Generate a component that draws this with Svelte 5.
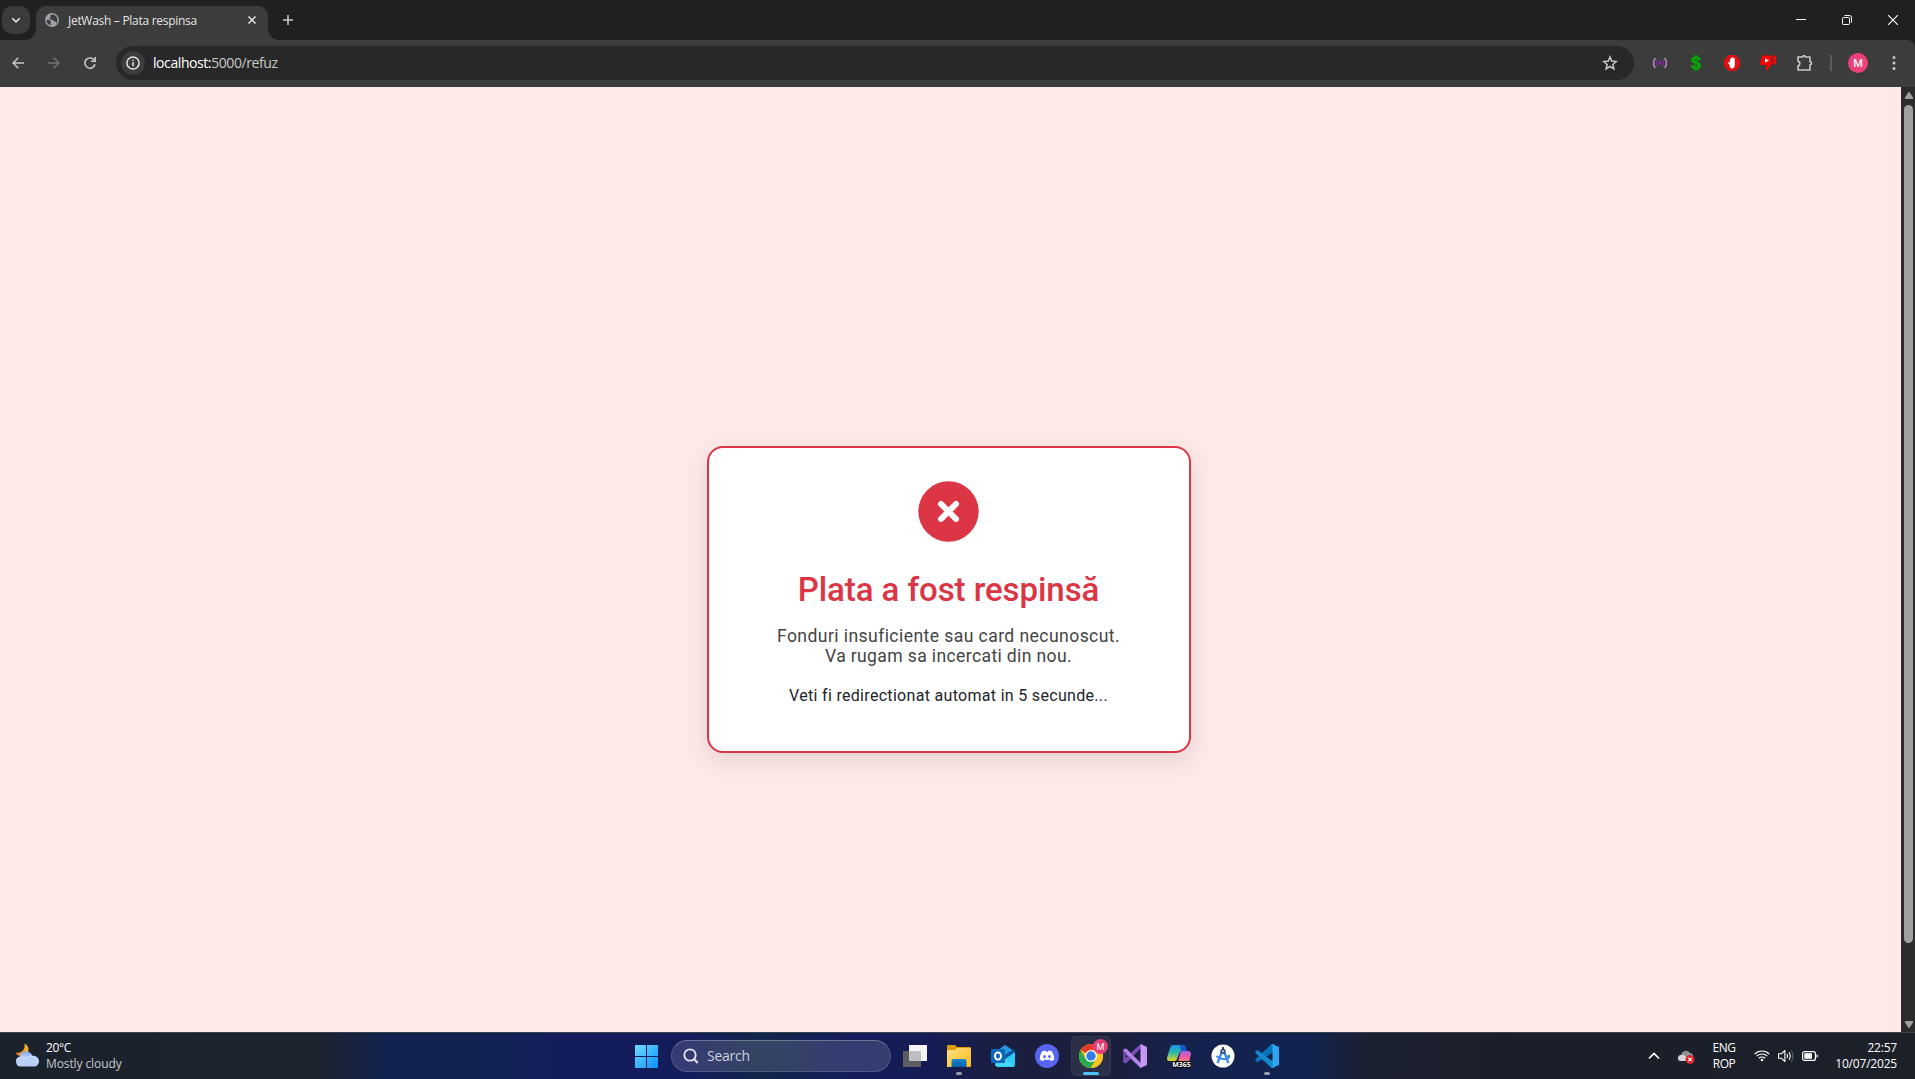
<script>
  const extensions = ['signal', 'dollar', 'adblock', 'dislike', 'puzzle'];
  const apps = ['taskview', 'explorer', 'outlook', 'discord', 'chrome', 'vs', 'm365', 'studio', 'vscode'];
  const running = ['explorer', 'vscode'];
</script>

<div class="screen">
  <header class="tabstrip">
    <button class="tab-search" aria-label="Search tabs">
      <svg width="10" height="10" viewBox="0 0 10 10"><path d="M1.3 3.2 5 6.9l3.7-3.7" fill="none" stroke="#e3e3e3" stroke-width="1.6" /></svg>
    </button>
    <div class="tab">
      <svg width="14" height="14" viewBox="0 0 14 14">
        <circle cx="7" cy="7" r="7" fill="#9aa0a6" />
        <path d="M1.4 7.2c1.5-.3 4 .1 4.4 1.1.4 1-.5 1.3-.3 2.3.1.7.6.7.7 1.7C3.700 12 1.500 10 1.400 7.200zM7.300 1.500C6.600 2.200 5.600 2 5.300 2.900c-.2.8.6 1.100.3 1.900-.2.700-1.200.400-1.300 1.100 0 .600.800.600 1.800.600 1.300 0 1.600.300 1.900 1 .5.900 1.600.400 2.400 1 .7.500.4 1.300 1 1.900C13.700 7 12 1.700 7.300 1.500z" fill="#3c3c3c" />
      </svg>
      <span class="tab-title">JetWash – Plata respinsa</span>
      <svg class="tab-close" width="10" height="10" viewBox="0 0 10 10"><path d="m1.500 1.500 7 7m0-7-7 7" stroke="#e3e3e3" stroke-width="1.500" /></svg>
    </div>
    <svg class="new-tab" width="12" height="12" viewBox="0 0 12 12"><path d="M6 1v10M1 6h10" stroke="#c7c7c7" stroke-width="1.600" /></svg>
    <div class="window-buttons">
      <span><svg width="10" height="10" viewBox="0 0 10 10"><path d="M0 4.500h10" stroke="#fff" /></svg></span>
      <span><svg width="10" height="10" viewBox="0 0 10 10" fill="none" stroke="#fff"><rect x=".5" y="2.500" width="7" height="7" rx="1" /><path d="M2.500 .5h5a2 2 0 0 1 2 2v5" /></svg></span>
      <span><svg width="10" height="10" viewBox="0 0 10 10"><path d="m0 0 10 10m0-10L0 10" stroke="#fff" stroke-width="1.100" /></svg></span>
    </div>
  </header>

  <div class="toolbar">
    <nav class="nav">
      <svg width="12" height="12" viewBox="0 0 12 12" fill="none" stroke="#c7c7c7" stroke-width="1.500"><path d="M12 6H1M6.300.700 1 6l5.300 5.300" /></svg>
      <svg width="12" height="12" viewBox="0 0 12 12" fill="none" stroke="#757575" stroke-width="1.500"><path d="M0 6h11M5.700.700 11 6l-5.300 5.300" /></svg>
      <svg width="12" height="12" viewBox="0 0 12 12"><path d="M10.300 3.300A5.100 5.100 0 1 0 11 7.200" fill="none" stroke="#c7c7c7" stroke-width="1.600" /><path d="M12 0v5H7V3.400h3.400V0z" fill="#c7c7c7" /></svg>
    </nav>
    <div class="omnibox">
      <span class="site-info">
        <svg width="14" height="14" viewBox="0 0 14 14"><circle cx="7" cy="7" r="6.100" fill="none" stroke="#e3e3e3" stroke-width="1.500" /><path d="M7 6v4.300M7 3.700v1.400" stroke="#e3e3e3" stroke-width="1.500" /></svg>
      </span>
      <span class="url"><b>localhost:</b>5000/refuz</span>
      <svg class="star" width="16" height="16" viewBox="0 0 16 16"><path d="m8 1.900 1.700 4.200 4.600.400-3.500 3 1.100 4.400L8 11.500l-3.900 2.400 1.100-4.400-3.500-3 4.600-.4z" fill="none" stroke="#c7c7c7" stroke-width="1.500" /></svg>
    </div>
    <div class="extensions">
      {#each extensions as name}
        <span class="ext">
          {#if name === 'signal'}
            <svg width="16" height="16" viewBox="0 0 16 16" fill="none"><path d="M3.300 3Q-.200 8 3.300 13M12.700 3q3.500 5 0 10" stroke="#b08bc4" stroke-width="1.500" /><path d="M5.200 5.200q-2 2.800 0 5.600M10.800 5.200q2 2.800 0 5.600" stroke="#8226a0" stroke-width="1.300" /><circle cx="8" cy="8" r="1.400" fill="#8e24aa" /></svg>
          {:else if name === 'dollar'}
            <svg width="16" height="16" viewBox="0 0 16 16" fill="none" stroke="#06a906"><path d="M12 5.100C11.400 1.900 4.700 1.800 4.400 5c-.2 3.300 7.400 2.300 7.400 5.600 0 3.700-7.500 3.300-7.700-.2" stroke-width="2.500" /><path d="M7 0v16M9.300 0v16" stroke-width="1.200" /></svg>
          {:else if name === 'adblock'}
            <svg width="16" height="16" viewBox="0 0 16 16"><path d="M4.700 0h6.600L16 4.700v6.600L11.300 16H4.700L0 11.300V4.700z" fill="#e00f12" /><path d="M5.500 10 3.900 7.600l1-.5 1 .9V4.200c0-.8 1.100-.8 1.200 0V3.100c0-.9 1.200-.9 1.300 0v-.3c.1-.8 1.200-.7 1.200.2v.6c.1-.7 1.200-.6 1.200.2v6.300c0 2.300-1.200 3.500-3 3.500-1.300 0-1.900-1.400-2.300-3.600z" fill="#fff" /></svg>
          {:else if name === 'dislike'}
            <svg width="16" height="16" viewBox="0 0 16 16"><path d="M2.500.500h9v9L7 15.500 5.800 14l.8-4H1.300Q0 10 0 8.500zM13 .5h3v9h-3z" fill="#f00" /><path d="m5 3.300 4 2.200-4 2.300z" fill="#fff" /></svg>
          {:else}
            <svg width="16" height="16" viewBox="0 0 16 16"><path d="M1 2h4.700a1.300 1.300 0 0 1 2.600 0H13v4.700a1.500 1.500 0 0 1 0 3V15H1v-4.200a2.400 2.400 0 0 0 0-4.700z" fill="none" stroke="#c7c7c7" stroke-width="1.600" stroke-linejoin="round" /></svg>
          {/if}
        </span>
      {/each}
      <i class="divider"></i>
      <span class="avatar">M</span>
      <svg class="kebab" width="4" height="16" viewBox="0 0 4 16" fill="#c7c7c7"><circle cx="2" cy="2.500" r="1.500" /><circle cx="2" cy="8" r="1.500" /><circle cx="2" cy="13.500" r="1.500" /></svg>
    </div>
  </div>

  <div class="viewport">
    <main class="page">
      <section class="card">
        <svg class="badge" width="61" height="61" viewBox="0 0 61 61"><circle cx="30.500" cy="30.500" r="30.200" fill="#dc3545" /><path d="m23 23 15 15m0-15L23 38" stroke="#fff" stroke-width="6" stroke-linecap="round" /></svg>
        <h1>Plata a fost respinsă</h1>
        <p class="reason"><span class="line1">Fonduri insuficiente sau card necunoscut.</span><br /><span class="line2">Va rugam sa incercati din nou.</span></p>
        <p class="redirect">Veti fi redirectionat automat in 5 secunde...</p>
      </section>
    </main>
    <div class="scrollbar">
      <svg width="10" height="7" viewBox="0 0 10 7"><path d="M4.200.500Q5-.400 5.800.500L9.300 6Q9.500 7 8.500 7h-7Q.500 7 .700 6z" fill="#9f9f9f" /></svg>
      <i class="thumb"></i>
      <svg class="down" width="10" height="7" viewBox="0 0 10 7"><path d="M4.200 6.500q.8.900 1.600 0L9.300 1Q9.500 0 8.500 0h-7Q.500 0 .700 1z" fill="#9f9f9f" /></svg>
    </div>
  </div>

  <footer class="taskbar">
    <div class="weather">
      <svg width="24" height="24" viewBox="0 0 24 24">
        <defs><linearGradient id="moon" x1="1" y1="0" x2="0" y2="1"><stop stop-color="#f6c33b" /><stop offset="1" stop-color="#ee7b17" /></linearGradient><linearGradient id="cloud" x2="0" y2="1"><stop stop-color="#84aaf0" /><stop offset=".5" stop-color="#bdd2f8" /><stop offset="1" stop-color="#b7ccf4" /></linearGradient></defs>
        <path d="M9.500.500c4.500 2 5.300 7.500 2.300 10.500-3 3.200-9 3-11.300-1.200C7.500 10.500 10.500 5.500 9.500.500z" fill="url(#moon)" />
        <path d="M5.500 23.500a5 5 0 0 1-.8-9.800C4.700 11 7.500 8.500 11 8.500c3.200 0 5.600 1.900 6.300 4.300 3.700-.2 6.700 2 6.700 5.400 0 3-2.300 5.300-5.300 5.300z" fill="url(#cloud)" />
        <path d="M1.500 17c3-4 7-3.200 9-1.500 3-3 8-3 11-.5" fill="none" stroke="#dce8fd" stroke-width="1.500" opacity=".65" />
      </svg>
      <div><div class="temp">20°C</div><div class="sky">Mostly cloudy</div></div>
    </div>

    <div class="dock">
      <span class="tile start">
        <svg width="23" height="23" viewBox="0 0 23 23"><defs><linearGradient id="win" x2="1" y2="1"><stop stop-color="#74dcff" /><stop offset="1" stop-color="#0590fb" /></linearGradient></defs><path d="M0 0h11v11H0zM12 0h11v11H12zM0 12h11v11H0zM12 12h11v11H12z" fill="url(#win)" /></svg>
      </span>
      <div class="search">
        <svg width="16" height="16" viewBox="0 0 16 16" fill="none" stroke="#e2e4ee"><circle cx="7" cy="7" r="5.700" stroke-width="1.800" /><path d="m11 11 3.800 4" stroke-width="2" /></svg>
        <span>Search</span>
      </div>
      {#each apps as app}
        <span class="tile" class:active={app === 'chrome'} class:running={running.includes(app)}>
          {#if app === 'taskview'}
            <svg width="24" height="24" viewBox="0 0 24 24"><path d="M6 1h18v16H6z" fill="#f5f5f6" /><path d="M0 7h18v16H0z" fill="#5d5d60" /><path d="M6 7h12v10H6z" fill="#bebec2" /></svg>
          {:else if app === 'explorer'}
            <svg width="24" height="24" viewBox="0 0 24 24"><defs><linearGradient id="fold" x2="1" y2="1"><stop stop-color="#ffe087" /><stop offset="1" stop-color="#fdb813" /></linearGradient><linearGradient id="tray" x2="0" y2="1"><stop stop-color="#1589d2" /><stop offset="1" stop-color="#0960ad" /></linearGradient></defs><path d="M0 2q0-1 1-1h7l2 2h13q1 0 1 1v5H0z" fill="#dc9c0c" /><path d="M0 6h8l2-2h13q1 0 1 1v17q0 1-1 1H0z" fill="url(#fold)" /><path d="M4.500 23v-6q0-2 2-2H18q1.500 0 1.500 2v6z" fill="url(#tray)" /><path d="M8 19h8" stroke="#0b62a8" /></svg>
          {:else if app === 'outlook'}
            <svg width="24" height="24" viewBox="0 0 24 24"><path d="m4 8 10-7 10 7-2 8H5z" fill="#1277c5" /><path d="m9 5 5-4 9.500 6.500L12 14z" fill="#2899df" /><path d="m14 14 10-6v13q0 2-2 2H6q-2-1-2-3z" fill="#2fcaf2" /><path d="m4 19 10-5 9 8.500H6q-2-1-2-3z" fill="#4bdcf7" opacity=".7" /><path d="m12 12 11-7 1 3-10 7z" fill="#0a55a1" /><rect y="5" width="14" height="14" rx="1" fill="#0d67bb" /><ellipse cx="7" cy="12" rx="3" ry="3.600" fill="none" stroke="#fff" stroke-width="1.900" /></svg>
          {:else if app === 'discord'}
            <svg width="24" height="24" viewBox="0 0 24 24"><circle cx="12" cy="12" r="12" fill="#5865f2" /><path d="M7 7.500q2-1 3.500-1l.5 1.200h2l.5-1.200q1.500 0 3.500 1 2.600 3.800 2.300 8-1.500 1.400-3.500 1.700l-1-1.600q-2.800.7-5.600 0l-1 1.600q-2-.3-3.500-1.700-.3-4.200 2.300-8z" fill="#fff" /><ellipse cx="9.600" cy="12.500" rx="1.400" ry="1.600" fill="#5865f2" /><ellipse cx="14.400" cy="12.500" rx="1.400" ry="1.600" fill="#5865f2" /></svg>
          {:else if app === 'chrome'}
            <svg width="24" height="24" viewBox="0 0 24 24"><circle cx="12" cy="12" r="12" fill="#fcc31e" /><path d="M12 12 1.600 6A12 12 0 0 1 22.400 6H12z" fill="#e33b2e" /><path d="M1.600 6A12 12 0 0 0 12 24l5.200-9L12 12 6.800 15z" fill="#2da94f" /><path d="M12 6h10.400A12 12 0 0 1 12 24l5.200-9z" fill="#fcc31e" /><circle cx="12" cy="12" r="6" fill="#fff" /><circle cx="12" cy="12" r="4.700" fill="#3479e8" /></svg>
            <b class="profile">M</b>
          {:else if app === 'vs'}
            <svg width="24" height="24" viewBox="0 0 24 24"><path d="m0 6 3-1.500L18 19v5L0 8z" fill="#9267cb" /><path d="M0 6v12l3 1.500V4.500z" fill="#6a459e" /><path d="M3 19.500 18 4V0l-6 5L0 17z" fill="#794eb3" /><path d="M3 4.500 0 6l17.500 18 2-3z" fill="#b184e5" /><path d="m17.500 0 6.500 3v18l-6.500 3z" fill="#c796f6" /></svg>
          {:else if app === 'm365'}
            <svg width="24" height="24" viewBox="0 0 24 24"><defs><linearGradient id="cl" x2="0" y2="1"><stop stop-color="#1790ef" /><stop offset=".5" stop-color="#2ebda2" /><stop offset="1" stop-color="#f0d21c" /></linearGradient><linearGradient id="cr" x2="0" y2="1"><stop stop-color="#a65be7" /><stop offset=".55" stop-color="#f05aa7" /><stop offset="1" stop-color="#fd8a54" /></linearGradient></defs><path d="M6 1h10q2 0 3 4l.5 2H15q-2 0-2.700 2L10 15q-.6 2-2.500 2H2q-3 0-1.500-5L3 4q.8-3 3-3z" fill="url(#cl)" /><path d="M13 1h3q2 0 3 4l.5 2H15l-1 .5z" fill="#1855c7" /><path d="M15 7h6.500q3 0 2.300 4L22 18H11l2-8q.5-3 2-3z" fill="url(#cr)" /></svg>
            <b class="m365">M365</b>
          {:else if app === 'studio'}
            <svg width="24" height="24" viewBox="0 0 24 24"><circle cx="12" cy="12" r="11.500" fill="#fff" /><path d="m15 12 4-1.500V14l-3 1z" fill="#34a853" /><path d="M11 7.500 6.500 19M13 7.500 17.500 19" stroke="#3f86ee" stroke-width="2.300" /><path d="M5.500 12q6.500 6 13 1" fill="none" stroke="#3f86ee" stroke-width="2" /><circle cx="12" cy="7.300" r="2" fill="#8ab4f8" stroke="#28384b" stroke-width="1.200" /><path d="M12 3v3" stroke="#28384b" stroke-width="1.800" /></svg>
          {:else}
            <svg width="24" height="24" viewBox="0 0 24 24"><path d="m.5 15 16-15 3 3.500v4L3 18q-1 .4-1.500-.2l-1-1Q0 16 .5 15z" fill="#0873b9" /><path d="M.5 9q-.5-1 0-1.500l1-1Q2 6 3 6.500l16.500 12-3 5.500z" fill="#1688d0" /><path d="M17.500 0 24 3v18l-6.500 3q-.8.200-1.500-.5l1.500-.8V1.300L16 .5q.7-.6 1.500-.5z" fill="#2ba5f1" /></svg>
          {/if}
        </span>
      {/each}
    </div>

    <div class="tray">
      <svg class="chev" width="12" height="8" viewBox="0 0 12 8"><path d="m1 6.500 5-5 5 5" fill="none" stroke="#fff" stroke-width="1.600" /></svg>
      <svg class="drive" width="17" height="14" viewBox="0 0 17 14"><path d="M3 11a3 3 0 0 1 0-6c1-4 6-6 9-2 4 0 4 6 2 8z" fill="#8f9092" /><path d="M0 8c0-3 4-4 6-3l5 4-1 2H3Q0 11 0 8z" fill="#d3d4d5" /><circle cx="12" cy="9.500" r="4.500" fill="#dc2632" /><path d="m10.300 7.800 3.400 3.400m0-3.400-3.400 3.400" stroke="#fff" stroke-width="1.200" /></svg>
      <div class="lang"><div>ENG</div><div>ROP</div></div>
      <div class="status">
        <svg width="16" height="13" viewBox="0 0 16 13" fill="none" stroke="#fff" stroke-width="1.200"><path d="M.600 5.100a10.400 10.400 0 0 1 14.800 0M2.700 7.200a7.500 7.500 0 0 1 10.600 0M4.900 9.300a4.400 4.400 0 0 1 6.200 0" /><circle cx="8" cy="11" r="1.300" fill="#fff" stroke="none" /></svg>
        <svg width="16" height="14" viewBox="0 0 16 14" fill="none" stroke="#fff" stroke-width="1.100"><path d="M.600 4.800h2.700L6.900 1.500v11L3.300 9.200H.600z" stroke-linejoin="round" /><path d="M9 5q1.300 2 0 4M11 3.200q2.600 3.800 0 7.600" /><path d="M13.300 1.500q3.600 5.500 0 11" stroke="#5d646c" /></svg>
        <svg width="16" height="10" viewBox="0 0 16 10"><rect x=".6" y=".6" width="12.800" height="8.800" rx="2" fill="none" stroke="#fff" stroke-width="1.200" /><rect x="2.300" y="2.300" width="7.700" height="5.400" rx=".6" fill="#fff" /><path d="M14.500 3.300q1.500 0 1.500 1.700t-1.500 1.700z" fill="#fff" /></svg>
      </div>
      <div class="clock"><div class="time">22:57</div><div class="date">10/07/2025</div></div>
    </div>
  </footer>
</div>

<style>
  :global(body) { margin: 0; overflow: hidden; }
  svg { display: block; flex: none; }
  .screen {
    display: flex; flex-direction: column; box-sizing: border-box;
    width: 1915px; height: 1079px; overflow: hidden;
    font-family: 'Open Sans', 'Noto Sans', sans-serif; background: #1f2120;
  }

  .tabstrip { display: flex; height: 40px; flex: none; background: #1f2120; }
  .tab-search {
    display: grid; place-items: center; width: 28px; height: 28px; margin: 6px 6px 0 2px;
    padding: 0; border: 0; border-radius: 10px; background: #3c3c3c;
  }
  .tab {
    position: relative; display: flex; align-items: center; box-sizing: border-box;
    width: 232px; height: 34px; margin-top: 6px; padding: 0 11px 6px 9px;
    border-radius: 10px 10px 0 0; background: #3c3c3c;
  }
  .tab::before, .tab::after { content: ''; position: absolute; bottom: 0; width: 10px; height: 10px; }
  .tab::before { left: -10px; background: radial-gradient(circle at 0 0, transparent 9.500px, #3c3c3c 10px); }
  .tab::after { right: -10px; background: radial-gradient(circle at 100% 0, transparent 9.500px, #3c3c3c 10px); }
  .tab-title { margin-left: 9px; font-size: 12px; letter-spacing: -0.290px; color: #e3e3e3; white-space: nowrap; }
  .tab-close { margin-left: auto; }
  .new-tab { margin: 14px 0 0 14px; }
  .window-buttons { display: flex; margin-left: auto; }
  .window-buttons span { display: grid; place-items: center; width: 46px; height: 40px; }
  .window-buttons span:last-child { width: 45px; }

  .toolbar { display: flex; align-items: center; height: 47px; flex: none; background: #3c3c3c; border-top-right-radius: 8px; }
  .nav { display: flex; gap: 24px; padding: 0 0 1px 12px; width: 104px; }
  .omnibox { display: flex; align-items: center; width: 1518px; height: 34px; margin-bottom: 1px; border-radius: 17px; background: #282828; }
  .site-info { display: grid; place-items: center; width: 24px; height: 24px; margin-left: 5px; border-radius: 50%; background: #3c3c3c; }
  .url { margin-left: 8px; padding-bottom: 1px; font-size: 14px; letter-spacing: -0.420px; color: #c7c7c7; }
  .url b { font-weight: 400; color: #fff; }
  .star { margin: 0 16px 0 auto; }
  .extensions { display: flex; align-items: center; margin-left: 18px; padding-bottom: 1px; }
  .ext { width: 36px; }
  .divider { width: 2px; height: 16px; margin-left: -12px; background: #5c5c5c; }
  .ext:nth-child(5) { margin: 0 9px 0 1px; }
  .avatar {
    display: grid; place-items: center; width: 20px; height: 20px; margin-left: 16px;
    border-radius: 50%; background: #ec407a; color: #fff; font: 500 11px Roboto, sans-serif;
  }
  .kebab { margin-left: 24px; }

  .viewport { display: flex; height: 945px; flex: none; }
  .page {
    display: flex; justify-content: center; align-items: flex-start; box-sizing: border-box;
    width: 1901px; padding: 359px 4px 0 0; background: #fee9e8; font-family: Roboto, sans-serif;
  }
  .card {
    display: flex; flex-direction: column; align-items: center; box-sizing: border-box;
    width: 484px; height: 307px; padding-top: 33px; border: 2px solid #dc3545; border-radius: 16px;
    background: #fff; box-shadow: 0 8px 24px rgba(0, 0, 0, 0.1); text-align: center; white-space: nowrap;
  }
  h1 { margin: 29px 0 0; font-size: 33px; line-height: 38px; font-weight: 500; letter-spacing: -0.060px; color: #dc3545; }
  p { margin: 0; }
  .reason { margin-top: 17px; font-size: 17.600px; line-height: 20px; color: #444; }
  .line1 { letter-spacing: 0.410px; }
  .line2 { letter-spacing: 0.350px; }
  .redirect { margin-top: 20px; font-size: 16px; line-height: 19px; letter-spacing: 0.310px; color: #212529; }

  .scrollbar { display: flex; flex-direction: column; align-items: center; width: 14px; padding: 5px 0 4px 1px; box-sizing: border-box; background: #2c2c2c; }
  .thumb { width: 9px; height: 838px; margin-top: 6px; border-radius: 5px; background: #9f9f9f; }
  .down { margin-top: auto; }

  .taskbar {
    display: flex; height: 47px; flex: none; box-sizing: border-box; border-top: 1px solid #3b4250; color: #fff;
    background: linear-gradient(90deg, #1c222c 0, #1c232e 320px, #12234f 385px, #122353 490px, #141d5b 560px, #141d5c 690px, #122649 760px, #141d5b 850px, #151c55 930px, #1a1f40 1010px, #1c1f3c 1110px, #14214d 1190px, #12234f 1310px, #1b202f 1370px, #1c1f2b 1500px, #1b2029 100%);
  }
  .weather { display: flex; width: 625px; box-sizing: border-box; padding: 10px 0 0 15px; gap: 7px; font-size: 12px; line-height: 16px; }
  .weather > div { margin-top: -3px; }
  .temp { letter-spacing: -0.400px; }
  .sky { color: #c5c8cb; letter-spacing: -0.100px; }
  .dock { display: flex; align-items: flex-start; width: 664px; }
  .tile { position: relative; display: grid; place-items: center; width: 40px; height: 40px; margin: 3px 2px 0; border-radius: 5px; box-sizing: border-box; }
  .start { padding-right: 1px; }
  .active { background: #2b2f48; box-shadow: inset 0 0 0 1px #34384f; }
  .active::after, .running::after { content: ''; position: absolute; bottom: 1px; left: 12px; width: 16px; height: 3px; border-radius: 2px; background: #4cc2ff; }
  .running::after { left: 17px; width: 6px; background: #9a9eae; }
  .profile {
    position: absolute; top: 3px; right: 3px; display: grid; place-items: center; width: 15px; height: 15px;
    border-radius: 50%; background: #e23d75; font: 400 9px Roboto, sans-serif;
  }
  .m365 { position: absolute; left: 13px; top: 25px; width: 19px; height: 7px; background: #000; font: 700 7px/7px 'Open Sans', sans-serif; text-align: center; }
  .search {
    display: flex; align-items: center; box-sizing: border-box; width: 220px; height: 32px; margin: 7px 2px 0;
    padding: 0 0 1px 11px; gap: 8px; border-radius: 16px; border: 1px solid rgba(255, 255, 255, 0.130); border-top-color: rgba(255, 255, 255, 0.280);
    background: rgba(255, 255, 255, 0.140); color: #cdd0dc; font-size: 14px; letter-spacing: -0.250px;
  }
  .tray { display: flex; flex: 1; align-items: center; padding: 0 18px 1px 359px; font-size: 12px; line-height: 16px; }
  .drive { margin: 2px 0 0 18px; }
  .lang { width: 24px; margin: 1px 0 0 17px; text-align: center; letter-spacing: -0.500px; }
  .status { display: flex; align-items: center; gap: 8px; margin-left: 18px; }
  .clock { margin-left: auto; text-align: right; letter-spacing: -0.200px; }
</style>
